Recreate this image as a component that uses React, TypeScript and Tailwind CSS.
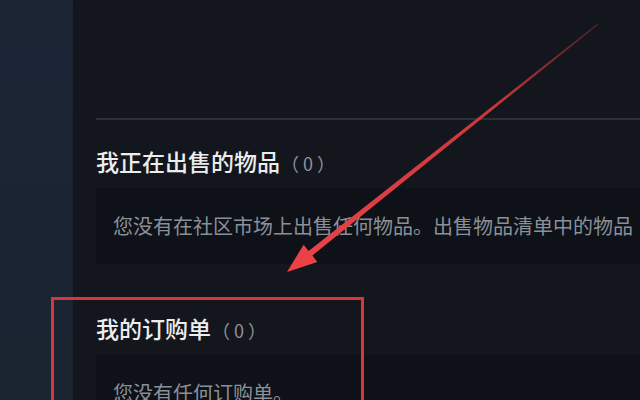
import React from "react";

const cjk = { fontFamily: '"Noto Sans CJK SC", "Noto Sans", sans-serif' };

function Arrow() {
  // tapered annotation arrow, tail at top-right, head pointing down-left
  return (
    <svg
      className="pointer-events-none absolute left-0 top-0"
      width={640}
      height={400}
      viewBox="0 0 640 400"
    >
      <defs>
        <linearGradient id="shaft" x1="598" y1="24" x2="300" y2="262" gradientUnits="userSpaceOnUse">
          <stop offset="0" stopColor="#7a2a2e" stopOpacity="0.6" />
          <stop offset="0.35" stopColor="#c8383c" />
          <stop offset="1" stopColor="#ec4247" />
        </linearGradient>
      </defs>
      <polygon
        points="598.4,24.4 597.6,23.6 308.6,250.9 303.6,244.7 287,272 317.3,261.9 312.4,255.6"
        fill="url(#shaft)"
      />
    </svg>
  );
}

function Section({ title, body }: { title: string; body: string }) {
  return (
    <div className="flex flex-col">
      <div className="flex items-baseline">
        <span className="text-[23px] font-medium leading-[30px] text-[#eceded]">{title}</span>
        <span className="ml-[1px] text-[18px] tracking-[4px] text-[#8d929a]">（0）</span>
      </div>
      <div className="mt-[11px] h-[76px] bg-[#0e1117] pl-[17px] pt-[25px]">
        <span className="whitespace-nowrap text-[20px] leading-[26px] text-[#8a9099]">{body}</span>
      </div>
    </div>
  );
}

export default function App() {
  return (
    <div className="relative flex h-[400px] w-[640px] overflow-hidden bg-[#13161d]" style={cjk}>
      <div className="w-[73px] shrink-0 bg-gradient-to-b from-[#1b2535] to-[#1a2330]" />
      <div className="flex min-w-0 flex-1 flex-col pl-[23px]">
        <div className="h-[118px] shrink-0" />
        <div className="h-px bg-[#07090c]" />
        <div className="h-[3px] border-t-2 border-[#2b3039]" />
        <div className="h-[26px] shrink-0" />
        <Section
          title="我正在出售的物品"
          body="您没有在社区市场上出售任何物品。出售物品清单中的物品"
        />
        <div className="h-[49px] shrink-0" />
        <Section title="我的订购单" body="您没有任何订购单。" />
      </div>
      <Arrow />
      <div className="pointer-events-none absolute left-[51px] top-[297px] h-[140px] w-[313px] border-[3px] border-[#d8363d]" />
    </div>
  );
}
